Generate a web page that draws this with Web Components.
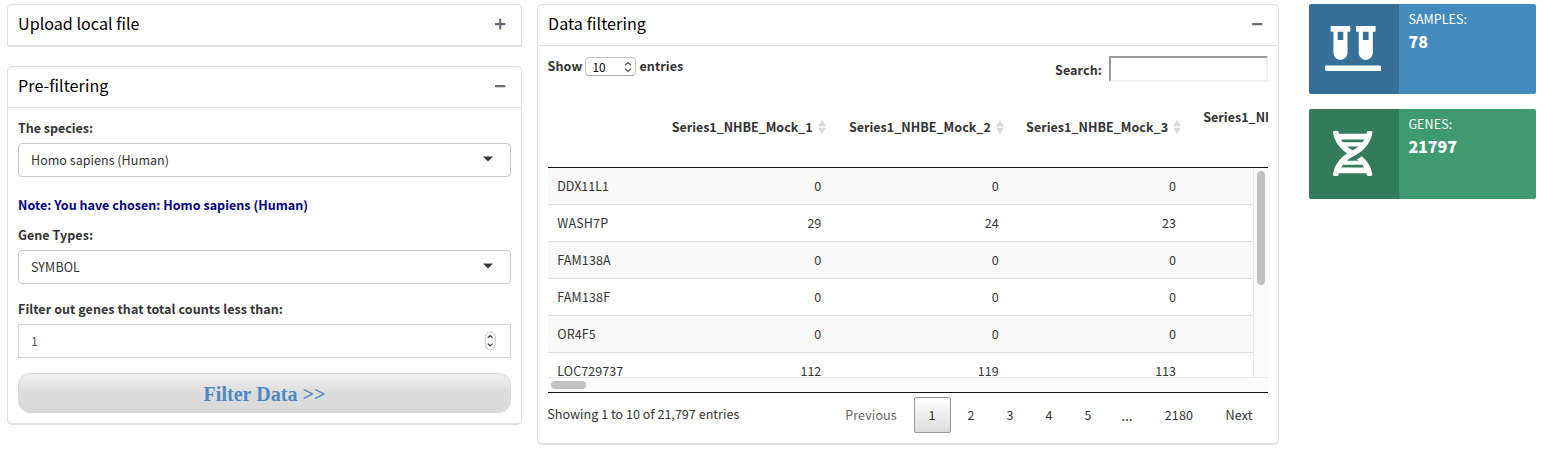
<!DOCTYPE html>
<html lang="en">
<head>
<meta charset="utf-8">
<title>Data filtering</title>
<style>
html,body{margin:0;background:#fff}
body{font:12.53px/20px "Noto Sans CJK SC","Noto Sans",sans-serif;color:#333;width:1544px;height:453px;overflow:hidden}
</style>
</head>
<body>
<filter-page></filter-page>
<script>
const define = (name, html, init) => {
  const t = document.createElement('template');
  t.innerHTML = html;
  customElements.define(name, class extends HTMLElement {
    connectedCallback() {
      if (this.shadowRoot) return;
      this.attachShadow({mode: 'open'}).append(t.content.cloneNode(true));
      if (init) init.call(this, this.shadowRoot);
    }
  });
};

/* One line of text; tracking is tuned so that it takes the given width. */
define('ui-text', `<style>:host{display:inline-block;white-space:nowrap;vertical-align:top}span{display:inline-block}</style><span><slot></slot></span>`,
  function (r) {
    const w = parseFloat(this.getAttribute('w'));
    const s = r.querySelector('span');
    if (!w) return;
    const n = this.textContent.length;
    s.style.letterSpacing = (w - s.getBoundingClientRect().width) / n + 'px';
  });

define('ui-card', `<style>
:host{display:block;box-sizing:border-box;border:1px solid #dedede;border-bottom:2px solid #dfdfdf;border-radius:5px;background:#fff}
header{display:flex;justify-content:space-between;align-items:flex-start;height:40px;padding:0 15px 0 10px;font-size:16.1px;line-height:37px;color:#000;box-sizing:border-box}
section{border-top:1px solid #dedede;padding:10px}
:host([collapsed]) section{display:none}
:host([collapsed]){border-radius:5px 5px 2px 2px}
svg{display:block;margin-top:12.5px}
:host([collapsed]) .minus,.plus{display:none}
:host([collapsed]) .plus{display:block}
</style>
<header><slot name="title"></slot>
<svg class="minus" width="12" height="12"><rect x="1" y="5" width="10.4" height="2.3" rx=".5" fill="#606c76"/></svg>
<svg class="plus" width="12" height="12"><path d="M5.2.8h2v4.3h4.2v2.1H7.2v4.2h-2V7.2H1V5.1h4.2z" fill="#5d6974"/></svg>
</header><section><slot></slot></section>`);

define('ui-select', `<style>
:host{display:flex;box-sizing:border-box;height:34px;border:1px solid #c9c9c9;border-radius:4px;align-items:center;justify-content:space-between;padding:0 17px 0 12px}
svg{display:block;margin-bottom:2px}
</style><slot></slot><svg width="10" height="6"><path d="M0 .5h10L5 5.5z" fill="#333"/></svg>`);

define('ui-number', `<style>
:host{display:flex;box-sizing:border-box;height:34px;border:1px solid #d3d5d9;align-items:center;justify-content:space-between;padding:0 14px 0 12px;color:#555}
svg{display:block}
</style><slot></slot><svg width="12" height="20"><rect x="1.2" y=".7" width="10" height="18" rx="5" fill="#fff" stroke="#c4c4c4"/><path d="M3.8 6.8 6.2 4.5l2.4 2.3M3.8 12.6 6.2 14.9l2.4-2.3" fill="none" stroke="#333" stroke-width="1.2"/></svg>`);

define('filter-button', `<style>
button{display:block;box-sizing:border-box;width:100%;height:40px;border:1px solid #d8d8d8;border-radius:12px;background:linear-gradient(#f1f1f1,#dcdcdc 48%,#dadada);color:#4e88c2;font:bold 20px/38px "Liberation Serif",serif;padding:1px 0 0;text-align:center}
:host{display:block}
</style><button><slot></slot></button>`);

define('pre-filter', `<style>
:host{display:block}
b{display:block;height:20px}
ui-select,ui-number{margin-top:5px}
.note{color:#000080;margin:18px 0 10px}
.last{margin-top:15px}
filter-button{margin:15px 0 -1px}
</style>
<b><ui-text w="75">The species:</ui-text></b>
<ui-select><ui-text w="138">Homo sapiens (Human)</ui-text></ui-select>
<b class="note"><ui-text w="290">Note: You have chosen: Homo sapiens (Human)</ui-text></b>
<b><ui-text w="75">Gene Types:</ui-text></b>
<ui-select><ui-text w="49">SYMBOL</ui-text></ui-select>
<b class="last"><ui-text w="265">Filter out genes that total counts less than:</ui-text></b>
<ui-number><ui-text>1</ui-text></ui-number>
<filter-button><ui-text w="122">Filter Data &gt;&gt;</ui-text></filter-button>`);

define('sort-head', `<style>
:host{display:flex;align-items:center;font-weight:bold}
svg{display:block;margin-left:5px}
</style><slot></slot><svg width="8" height="14"><path d="M4 0l4 6.2H0zM4 14l4-6.2H0z" fill="#d8d8d8"/></svg>`);

define('gene-row', `<style>
:host{display:grid;grid-template-columns:87px 177px 177.4px 177.3px;box-sizing:border-box;height:37px;line-height:36px;padding-left:9.3px;border-bottom:1px solid #ddd;flex:none}
:host([odd]){background:#f9f9f9}
i{font-style:normal;text-align:right}
.n{text-align:left}
</style><span class="n"></span><i></i><i></i><i></i>`,
  function (r) {
    const t = document.createElement('ui-text');
    t.setAttribute('w', this.getAttribute('w'));
    t.textContent = this.getAttribute('gene');
    r.querySelector('.n').append(t);
    const v = this.getAttribute('counts').split(' ');
    r.querySelectorAll('i').forEach((e, k) => e.textContent = v[k]);
  });

define('gene-table', `<style>
:host{display:block;width:720px}
.head{display:flex;align-items:center;overflow:hidden;padding:0 0 1px 123.7px;box-sizing:border-box;border-bottom:1px solid #111;height:80px}
sort-head{width:177.2px;flex:none}
sort-head:last-child{margin-top:-20px}
.body{display:grid;grid-template:209px 15px/705px 15px;border-bottom:1px solid #111}
.rows{display:flex;flex-direction:column;overflow:hidden}
.v{border-left:1px solid #e7e7e7;background:#fafafa;padding:3px 0 0 3px}
.v i{display:block;width:8px;height:114px;border-radius:4px;background:#c1c1c1}
.h{grid-column:1/3;border-top:1px solid #e7e7e7;background:#fafafa;padding:3px 0 0 3px}
.h i{display:block;width:35px;height:8px;border-radius:4px;background:#c1c1c1}
gene-row{width:705px}
</style>
<div class="head">
<sort-head><ui-text w="141">Series1_NHBE_Mock_1</ui-text></sort-head>
<sort-head><ui-text w="142">Series1_NHBE_Mock_2</ui-text></sort-head>
<sort-head><ui-text w="142">Series1_NHBE_Mock_3</ui-text></sort-head>
<sort-head><ui-text w="142">Series1_NHBE_Mock_4</ui-text></sort-head>
</div>
<div class="body"><div class="rows">
<gene-row odd gene="DDX11L1" w="51.5" counts="0 0 0"></gene-row>
<gene-row gene="WASH7P" w="51" counts="29 24 23"></gene-row>
<gene-row odd gene="FAM138A" w="53.5" counts="0 0 0"></gene-row>
<gene-row gene="FAM138F" w="53" counts="0 0 0"></gene-row>
<gene-row odd gene="OR4F5" w="38.5" counts="0 0 0"></gene-row>
<gene-row gene="LOC729737" w="66" counts="112 119 113"></gene-row>
</div><div class="v"><i></i></div><div class="h"><i></i></div></div>`);

define('table-tools', `<style>
:host{display:flex;justify-content:space-between;height:32px;font-weight:bold;width:720px}
.len{display:flex;height:20px;margin-left:-.6px}
.sel{display:flex;box-sizing:border-box;width:51px;height:19px;margin:1px 3px 0 3px;border:1px solid #c4c4c4;border-bottom-color:#aaa;border-radius:4px;font-weight:400;font-size:11.8px;line-height:17px;color:#000;justify-content:space-between;align-items:center;padding:0 3px 0 6px}
.s{display:flex;height:26px;line-height:27px}
.box{box-sizing:border-box;width:159px;height:26px;margin-left:7px;border:2px solid;border-color:#999 #eee #eee #999}
svg{display:block}
</style>
<div class="len"><ui-text w="35">Show</ui-text><span class="sel"><span>10</span><svg width="8" height="12"><path d="M1 4.4 4 1.5l3 2.9M1 7.6l3 2.9 3-2.9" fill="none" stroke="#444" stroke-width="1.2"/></svg></span><ui-text w="44">entries</ui-text></div>
<div class="s"><ui-text w="47">Search:</ui-text><span class="box"></span></div>`);

define('page-button', `<style>
:host{display:block;box-sizing:border-box;height:36px;line-height:34px;border:1px solid transparent;text-align:center;border-radius:2px;color:#333;flex:none}
:host([current]){border-color:#979797;background:linear-gradient(#fff,#dcdcdc)}
:host([disabled]){color:#666}
</style><slot></slot>`);

define('table-footer', `<style>
:host{display:flex;justify-content:space-between;width:720px;height:41px}
.info{padding-top:11px;margin-left:-.7px}
.p{display:flex;padding-top:4px}
page-button{width:37px;margin-right:2px}
</style>
<span class="info"><ui-text w="192">Showing 1 to 10 of 21,797 entries</ui-text></span>
<div class="p">
<page-button disabled style="width:81px"><ui-text w="51.5">Previous</ui-text></page-button>
<page-button current>1</page-button><page-button>2</page-button><page-button>3</page-button><page-button>4</page-button><page-button style="margin:0">5</page-button>
<page-button style="width:43.5px;margin:0;font-family:'Noto Sans',sans-serif;font-size:14.5px"><ui-text w="14">…</ui-text></page-button>
<page-button style="width:58px"><ui-text w="28.5">2180</ui-text></page-button>
<page-button style="width:58px;margin:0"><ui-text w="27">Next</ui-text></page-button>
</div>`);

define('info-box', `<style>
:host{display:flex;height:90px;border-radius:2px;overflow:hidden;background:var(--c);color:#fff}
.icon{width:90px;display:flex;align-items:center;justify-content:center;background:rgba(0,0,0,.2);box-sizing:border-box;padding:0 2px 2px 0}
.t{padding:5px 9.4px}
.t ::slotted(*){display:block!important}
</style><div class="icon"><slot name="icon"></slot></div><div class="t"><slot></slot></div>`);

define('filter-page', `<style>
:host{display:grid;grid-template-columns:515px 742px 227px;column-gap:15px;padding:4px 0 0 7px;align-items:start}
.left{display:grid;row-gap:19px}
.right{display:grid;row-gap:15px;margin-left:15px;width:227px}
.main{height:441px;width:742px}
.up{height:43px}.pre{height:359px}
.num{display:block;font-size:16.1px;font-weight:800;line-height:24px}
.cap{display:block}
svg{display:block;fill:#fff}
</style>
<div class="left">
<ui-card class="up" collapsed><ui-text slot="title" w="121.5">Upload local file</ui-text></ui-card>
<ui-card class="pre"><ui-text slot="title" w="90.5">Pre-filtering</ui-text><pre-filter></pre-filter></ui-card>
</div>
<ui-card class="main"><ui-text slot="title" w="98">Data filtering</ui-text>
<table-tools></table-tools><gene-table></gene-table><table-footer></table-footer></ui-card>
<div class="right">
<info-box style="--c:#448bbd"><svg slot="icon" width="56.25" height="45" viewBox="0 0 640 512"><path d="M72 64h24v240c0 44.1 35.9 80 80 80s80-35.9 80-80V64h24c4.4 0 8-3.6 8-8V8c0-4.4-3.6-8-8-8H72c-4.4 0-8 3.6-8 8v48c0 4.4 3.6 8 8 8zm72 0h64v96h-64V64zm480 384H16c-8.8 0-16 7.2-16 16v32c0 8.8 7.2 16 16 16h608c8.8 0 16-7.2 16-16v-32c0-8.8-7.2-16-16-16zM360 64h24v240c0 44.1 35.9 80 80 80s80-35.9 80-80V64h24c4.4 0 8-3.6 8-8V8c0-4.4-3.6-8-8-8H360c-4.4 0-8 3.6-8 8v48c0 4.4 3.6 8 8 8zm72 0h64v96h-64V64z"/></svg>
<ui-text class="cap" w="58.5">SAMPLES:</ui-text><ui-text class="num" w="19.5">78</ui-text></info-box>
<info-box style="--c:#409a71"><svg slot="icon" width="39.4" height="45" viewBox="0 0 448 512"><path d="M.1 494.1c-1.1 9.5 6.3 17.8 15.9 17.8l32.3.1c8.1 0 14.9-5.9 16-13.9.7-4.9 1.8-11.1 3.4-18.1H380c1.6 6.9 2.9 13.2 3.5 18.1 1.1 8 7.9 14 16 13.9l32.3-.1c9.6 0 17.1-8.3 15.9-17.8-4.6-37.9-25.6-129-118.9-207.7-17.6 12.4-37.1 24.8-58.5 36.6 6.2 4.6 11.4 9.4 17 14.2H159.7c21.3-18.1 47-35.6 78.7-51.4C410.5 199.1 442.1 65.8 447.9 17.9 449 8.4 441.6.1 432 .1L399.6 0c-8.1 0-14.9 5.9-16 13.9-.7 4.9-1.8 11.1-3.4 18.1H67.8c-1.6-7-2.7-13.1-3.4-18.1-1.1-8-7.9-14-16-13.9L16.1.1C6.5.1-1 8.4.1 17.9 5.3 60.8 31.4 171.8 160 256 31.5 340.2 5.3 451.2.1 494.1zM224 219.6c-25.1-13.7-46.4-28.4-64.3-43.6h128.5c-17.8 15.2-39.1 30-64.2 43.6zM355.1 96c-5.8 10.4-12.8 21.1-21 32H114c-8.3-10.9-15.3-21.6-21-32h262.1zM92.9 416c5.8-10.4 12.8-21.1 21-32h219.4c8.3 10.9 15.4 21.6 21.2 32H92.9z"/></svg>
<ui-text class="cap" w="44">GENES:</ui-text><ui-text class="num" w="48.5">21797</ui-text></info-box>
</div>`);
</script>
</body>
</html>
